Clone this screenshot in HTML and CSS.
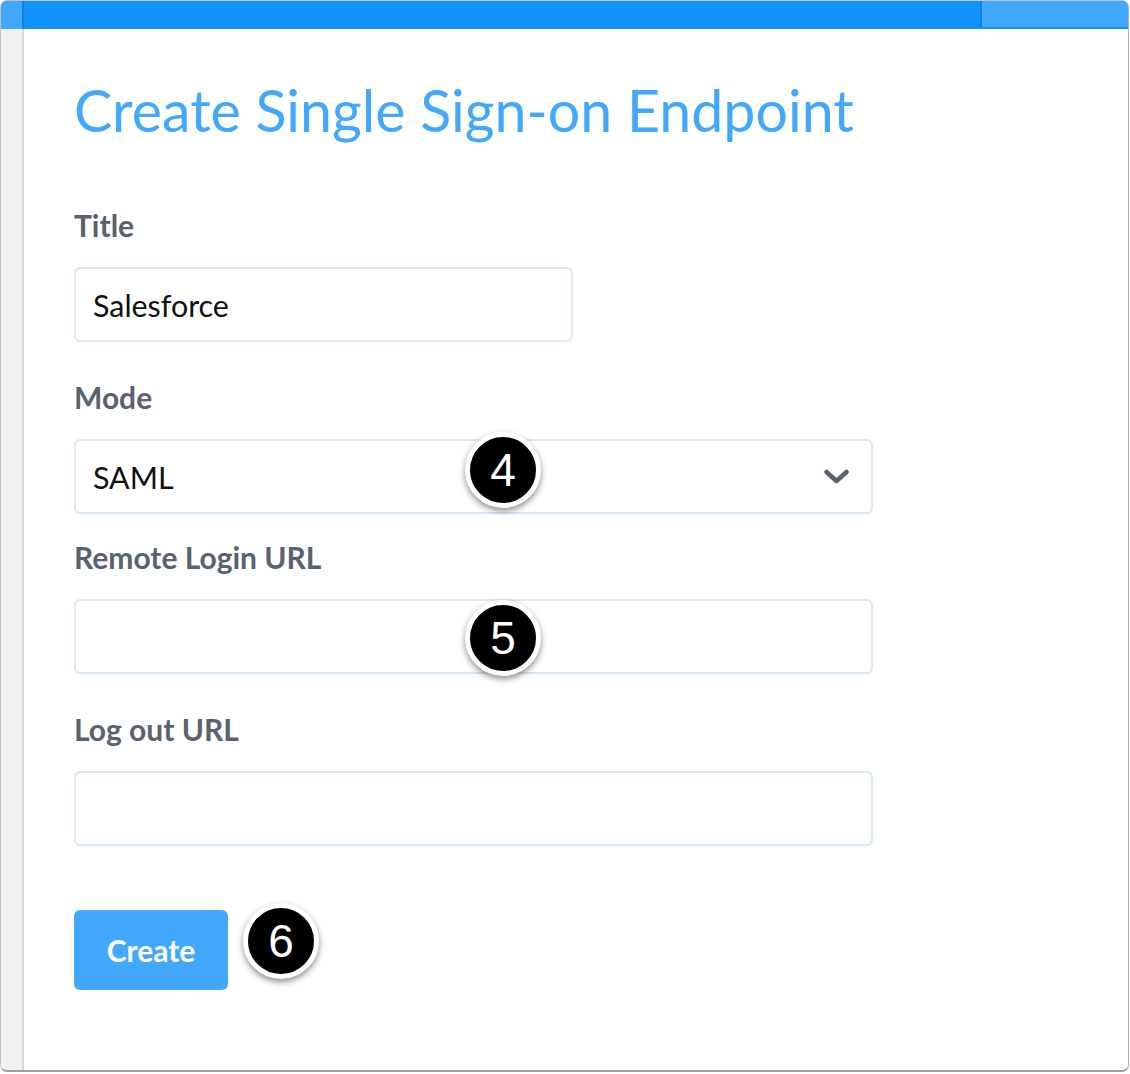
FILE: index.html
```html
<!DOCTYPE html>
<html>
<head>
<meta charset="utf-8">
<link rel="stylesheet" href="styles.css">
</head>
<body>
<div class="window">
  <div class="topbar">
    <div class="tb-left"></div>
    <div class="tb-mid"></div>
    <div class="tb-right"></div>
  </div>
  <div class="main">
    <div class="sidebar"></div>
    <div class="content">
      <h1 class="heading">Create Single Sign-on Endpoint</h1>
      <div class="group">
        <label class="label">Title</label>
        <div class="field field-short"><span class="value">Salesforce</span></div>
      </div>
      <div class="group group-tight">
        <label class="label">Mode</label>
        <div class="field field-wide field-select">
          <span class="value">SAML</span>
          <svg class="chevron" width="25" height="16" viewBox="0 0 25 16"><polyline points="2.5,3 12.5,12 22.5,3" fill="none" stroke="#5a6270" stroke-width="4.5" stroke-linecap="round" stroke-linejoin="round"/></svg>
          <span class="badge badge-4">4</span>
        </div>
      </div>
      <div class="group">
        <label class="label">Remote Login URL</label>
        <div class="field field-wide">
          <span class="badge badge-5">5</span>
        </div>
      </div>
      <div class="group group-last">
        <label class="label">Log out URL</label>
        <div class="field field-wide"></div>
      </div>
      <div class="actions">
        <button class="btn">Create</button>
        <span class="badge badge-6">6</span>
      </div>
    </div>
  </div>
</div>
</body>
</html>
```
FILE: styles.css
```css
* { box-sizing: border-box; }
html, body { margin: 0; padding: 0; background: #ffffff; }
body { width: 1130px; height: 1074px; overflow: hidden; font-family: "Lato", "Open Sans", sans-serif; }

.window {
  width: 1129px;
  height: 1072px;
  border: 1px solid #c2c2c2;
  border-right-color: #b4b4b4;
  border-bottom: 2px solid #9e9e9e;
  border-radius: 7px;
  overflow: hidden;
  display: flex;
  flex-direction: column;
  background: #fff;
}

.topbar {
  height: 28px;
  display: flex;
  background: #1193fb;
  flex: none;
}
.tb-left { width: 23px; height: 28px; background: #42a8fc; border-right: 2px solid #0a82e0; }
.tb-mid { flex: 1; }
.tb-right { width: 148px; height: 26px; background: #42a8fc; border-left: 2px solid #0a82e0; }

.main { flex: 1; display: flex; }
.sidebar { width: 23px; background: #f0f1f3; border-right: 2px solid #d5dbe2; flex: none; }
.content { flex: 1; padding: 46px 0 0 50px; }

.heading {
  margin: 0 0 62px 0;
  font-weight: 400;
  font-size: 57.3px;
  line-height: 70px;
  color: #42a8fc;
}

.group { margin-bottom: 37px; position: relative; }
.group-tight { margin-bottom: 25px; }
.group-last { margin-bottom: 64px; }

.label {
  display: block;
  font-size: 30px;
  font-weight: 700;
  color: #5a6270;
  line-height: 36px;
  margin-bottom: 24px;
}

.field {
  position: relative;
  height: 75px;
  border: 2px solid #d9e8f6;
  border-radius: 6px;
  display: flex;
  align-items: center;
  padding: 0 17px;
}
.field-short { width: 499px; }
.field-wide { width: 799px; }
.field-select { justify-content: space-between; padding-right: 22px; }
.value { font-size: 30.4px; color: #111; }

.chevron { display: block; }

.actions { position: relative; }
.btn {
  display: block;
  width: 154px;
  height: 80px;
  border: none;
  border-radius: 6px;
  background: #42a8fc;
  color: #fff;
  font-family: inherit;
  font-size: 30px;
  font-weight: 700;
  padding: 0;
}

.badge {
  position: absolute;
  width: 76px;
  height: 76px;
  border-radius: 50%;
  background: #000;
  border: 5px solid #fff;
  box-shadow: 0 3px 6px rgba(0,0,0,0.45);
  color: #fff;
  font-family: "Liberation Sans", Arial, sans-serif;
  font-size: 46px;
  line-height: 66px;
  text-align: center;
}
.badge-4 { left: 389px; top: -9px; }
.badge-5 { left: 389px; top: -1px; }
.badge-6 { left: 169px; top: -7px; }
```
